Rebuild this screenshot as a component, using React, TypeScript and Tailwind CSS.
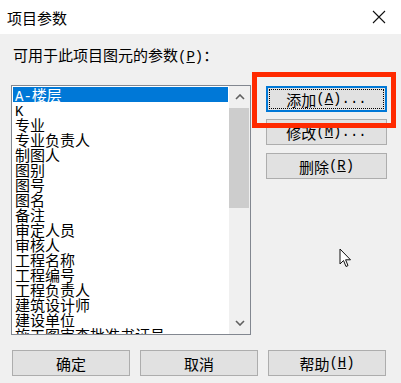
import React from "react";

const items = [
  "A-楼层",
  "K",
  "专业",
  "专业负责人",
  "制图人",
  "图别",
  "图号",
  "图名",
  "备注",
  "审定人员",
  "审核人",
  "工程名称",
  "工程编号",
  "工程负责人",
  "建筑设计师",
  "建设单位",
  "施工图审查批准书证号",
  "设计单位",
];

const font = "font-['Noto_Sans_CJK_SC','Noto_Sans',sans-serif]";

// half-width ascii like the old bitmap UI font
function A({ children }: { children: React.ReactNode }) {
  return <span className="font-['Liberation_Mono',monospace] text-[14px]">{children}</span>;
}

function Btn({ children, w = "w-[121px]" }: { children: React.ReactNode; w?: string }) {
  return (
    <div className={`${w} h-[26px] bg-[#e1e1e1] border border-[#adadad] flex items-center justify-center text-[15px] leading-[15px] text-black`}>
      {children}
    </div>
  );
}

export default function App() {
  return (
    <div className={`relative w-[401px] h-[383px] bg-[#f0f0f0] overflow-hidden ${font} text-black`}>
      {/* title bar */}
      <div className="h-[34px] bg-white flex items-center justify-between pl-[7px] pr-[15px]">
        <span className="text-[15px] leading-[15px]">项目参数</span>
        <svg width="14" height="14" viewBox="0 0 14 14" aria-hidden="true">
          <path d="M1 1 L13 13 M13 1 L1 13" stroke="#111" strokeWidth="1.1" />
        </svg>
      </div>

      <div className="px-[11px] pt-[13px]">
        <div className="ml-[2px] h-[15px] text-[15px] leading-[15px] whitespace-nowrap">
          可用于此项目图元的参数<A>(<u>P</u>)</A>：
        </div>

        <div className="mt-[23px] flex">
          {/* list box */}
          <div className="w-[240px] h-[250px] border border-[#828790] bg-white flex">
            <div className="w-[217px] h-full p-[1px] overflow-hidden">
              {items.map((it, i) => (
                <div
                  key={it}
                  className={`h-[15px] pl-[2px] text-[15px] leading-[15px] whitespace-nowrap overflow-visible ${
                    i === 0 ? "bg-[#0078d7] text-white" : ""
                  }`}
                >
                  {it === "A-楼层" ? (
                    <>
                      <A>A-</A>楼层
                    </>
                  ) : it === "K" ? (
                    <A>K</A>
                  ) : (
                    it
                  )}
                </div>
              ))}
            </div>
            {/* scrollbar */}
            <div className="w-[21px] bg-[#f0f0f0] flex flex-col">
              <div className="h-[22px] flex items-center justify-center">
                <svg width="10" height="6" viewBox="0 0 10 6" aria-hidden="true">
                  <path d="M1 5 L5 1 L9 5" fill="none" stroke="#606060" strokeWidth="1.6" />
                </svg>
              </div>
              <div className="h-[100px] mr-[1px] bg-[#cdcdcd]" />
              <div className="flex-1" />
              <div className="h-[22px] flex items-center justify-center">
                <svg width="10" height="6" viewBox="0 0 10 6" aria-hidden="true">
                  <path d="M1 1 L5 5 L9 1" fill="none" stroke="#606060" strokeWidth="1.6" />
                </svg>
              </div>
            </div>
          </div>

          {/* right buttons */}
          <div className="ml-[15px] mt-[1px] flex flex-col">
            <div className="w-[121px] h-[26px] bg-[#e1e1e1] border-2 border-[#0078d7] p-[1px] flex">
              <div className="flex-1 border border-dotted border-black flex items-center justify-center text-[15px] leading-[15px]">
                添加<A>(<u>A</u>)...</A>
              </div>
            </div>
            <div className="mt-[7px]">
              <Btn>
                修改<A>(<u>M</u>)...</A>
              </Btn>
            </div>
            <div className="mt-[8px]">
              <Btn>
                删除<A>(<u>R</u>)</A>
              </Btn>
            </div>
          </div>
        </div>

        {/* bottom buttons */}
        <div className="mt-[15px] ml-[1px] flex gap-[10px]">
          <Btn w="w-[118px]">确定</Btn>
          <Btn w="w-[118px]">取消</Btn>
          <Btn w="w-[118px]">
            帮助<A>(<u>H</u>)</A>
          </Btn>
        </div>
      </div>

      {/* red highlight annotation */}
      <div className="absolute left-[252px] top-[72px] w-[144px] h-[56px] border-[5px] border-[#ff2a00] pointer-events-none" />

      {/* mouse cursor */}
      <svg className="absolute left-[339px] top-[248px]" width="14" height="21" viewBox="0 0 14 21" aria-hidden="true">
        <path d="M1 1 L1 16 L4.5 12.5 L7 18.5 L9 17.6 L6.6 11.8 L11.5 11.8 Z" fill="white" stroke="#111" strokeWidth="1" strokeLinejoin="miter" />
      </svg>
    </div>
  );
}
